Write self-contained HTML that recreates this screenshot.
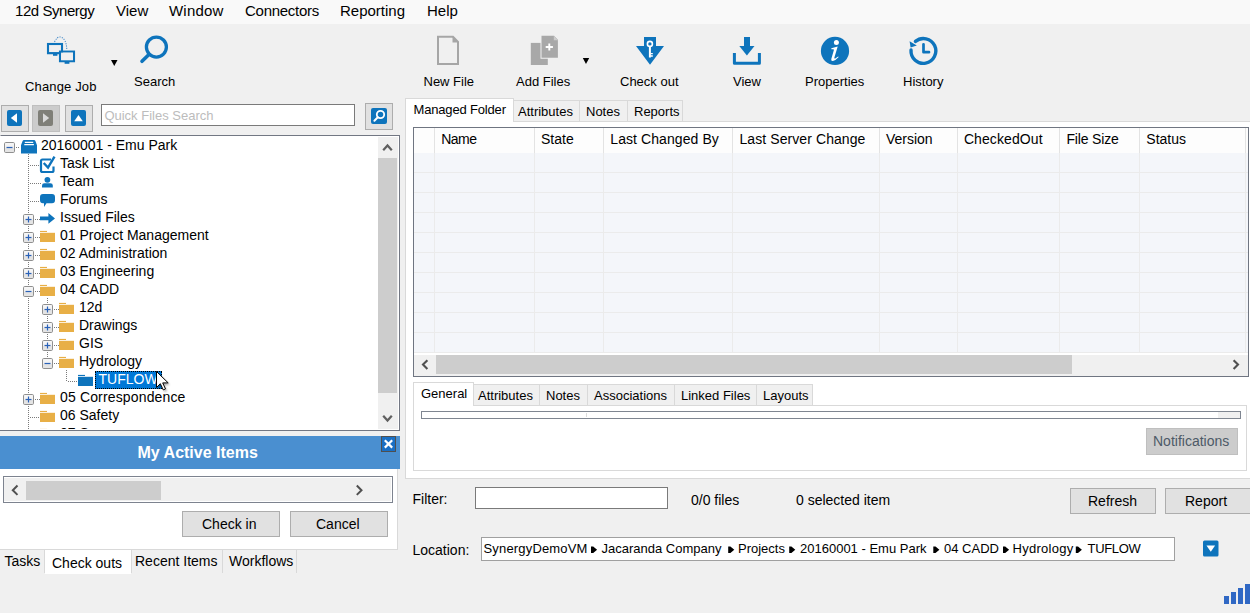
<!DOCTYPE html>
<html><head><meta charset="utf-8">
<style>
*{box-sizing:border-box}
html,body{margin:0;padding:0}
body{width:1250px;height:613px;overflow:hidden;position:relative;background:#f0f0f0;font-family:"Liberation Sans",sans-serif;color:#000}
.a{position:absolute}
.t{position:absolute;white-space:pre;line-height:1;font-family:"Liberation Sans",sans-serif}
.s13{font-size:13px}
.s14{font-size:14px}
.s15{font-size:15px}
svg{position:absolute;overflow:visible}
</style></head><body>

<!-- MENU BAR -->
<div class="a" style="left:0;top:0;width:1250px;height:24px;background:#f9f9f9"></div>
<span class="t s15" style="left:15px;top:3px;letter-spacing:-0.45px">12d Synergy</span>
<span class="t s15" style="left:116px;top:3px">View</span>
<span class="t s15" style="left:169px;top:3px;letter-spacing:0.2px">Window</span>
<span class="t s15" style="left:245px;top:3px;letter-spacing:-0.27px">Connectors</span>
<span class="t s15" style="left:340px;top:3px">Reporting</span>
<span class="t s15" style="left:427px;top:3px">Help</span>

<!-- TOOLBAR -->
<!-- change job icon -->
<svg style="left:0;top:0" width="1250" height="100">
 <g fill="none" stroke="#0e74bc" stroke-width="2.1">
  <rect x="48" y="44" width="14" height="9.2"/>
  <rect x="60" y="51.6" width="14" height="9.6"/>
 </g>
 <rect x="47" y="52.4" width="16" height="1.6" fill="#0e74bc"/>
 <rect x="59" y="60.4" width="16" height="1.6" fill="#0e74bc"/>
 <rect x="53" y="54" width="4.4" height="1.8" fill="#0e74bc"/>
 <rect x="64.6" y="62" width="4.8" height="1.8" fill="#0e74bc"/>
 <rect x="61.05" y="52.65" width="11.9" height="7.6" fill="#f0f0f0"/>
 <path d="M54.5 42 Q57 36.5 60.5 37 Q66.5 38.5 66.8 50" fill="none" stroke="#4d8fca" stroke-width="1.1" stroke-dasharray="1.2 1.2"/>
 <path d="M111 60 h6.5 l-3.25 6z" fill="#000"/>
 <!-- search -->
 <circle cx="156.4" cy="47.1" r="10" fill="none" stroke="#0e74bc" stroke-width="3.3"/>
 <path d="M149.2 54.3 L142 61.3" stroke="#0e74bc" stroke-width="3.6" stroke-linecap="round"/>
 <!-- new file -->
 <path d="M438 36.8 h15 l5 5 v22.2 h-20z" fill="none" stroke="#a6a6a6" stroke-width="2"/>
 <path d="M452.5 36 v6.5 h6.5z" fill="#a6a6a6"/>
 <!-- add files -->
 <rect x="530.8" y="42.9" width="17" height="22.1" fill="#a8a8a8"/>
 <path d="M540.5 35 h14 l4.4 4.4 v19.3 h-18.4z" fill="#f0f0f0"/>
 <path d="M541.5 35.8 h12.5 l3.9 3.9 v18 h-16.4z" fill="#a8a8a8"/>
 <path d="M553.8 35.8 v4.4 h4.4z" fill="#cccccc"/>
 <path d="M549.3 43.4 v7.2 M545.7 47 h7.2" stroke="#fff" stroke-width="1.9"/>
 <path d="M582.8 58 h6.4 l-3.2 6z" fill="#000"/>
 <!-- check out -->
 <path d="M644 37 h12 v9 h8 l-14 18.7 l-14 -18.7 h8z" fill="#0e74bc"/>
 <circle cx="649.9" cy="43.9" r="2.5" fill="none" stroke="#fff" stroke-width="1.6"/>
 <path d="M649.9 46.2 v11.3" stroke="#fff" stroke-width="2"/>
 <path d="M650.5 53.6 h2.3 M650.5 56 h2.3" stroke="#fff" stroke-width="1.3"/>
 <!-- view -->
 <rect x="744" y="37" width="6" height="9.5" fill="#0e74bc"/>
 <path d="M739.3 46 h15.2 l-7.6 9.6z" fill="#0e74bc"/>
 <path d="M734.4 53 v10.2 h25 v-10.2" fill="none" stroke="#0e74bc" stroke-width="3" stroke-linejoin="round"/>
 <!-- properties -->
 <circle cx="835" cy="50.95" r="14.1" fill="#0e74bc"/>
 <circle cx="836.4" cy="42.4" r="2.5" fill="#fff"/>
 <path d="M831.3 48.3 L837.7 46.6 L834.4 57.6 Q834 59 835.3 58.4 Q836.7 57.6 838.1 56.4 L838.7 57.1 Q835.8 60.5 832.9 60.9 Q830.7 61.1 831.3 58.9 L833.9 50.1 Q834.1 49.1 833 49.2 L831.4 49.3z" fill="#fff"/>
 <!-- history -->
 <path d="M915.43 41.4 A12.4 12.4 0 1 1 911.03 50.03" fill="none" stroke="#0e74bc" stroke-width="3.4" stroke-linecap="round"/>
 <path d="M909.6 41.2 L910.6 47.6 L916.8 45.6z" fill="#0e74bc"/>
 <path d="M923.5 44.3 v7.9 h5.5" fill="none" stroke="#0e74bc" stroke-width="2.7" stroke-linecap="round" stroke-linejoin="round"/>
</svg>
<span class="t s13" style="left:25px;top:80px;letter-spacing:0.15px">Change Job</span>
<span class="t s13" style="left:134px;top:75px">Search</span>
<span class="t s13" style="left:423.5px;top:75px">New File</span>
<span class="t s13" style="left:516px;top:75px">Add Files</span>
<span class="t s13" style="left:620px;top:75px">Check out</span>
<span class="t s13" style="left:733px;top:75px">View</span>
<span class="t s13" style="left:805px;top:75px">Properties</span>
<span class="t s13" style="left:903px;top:75px">History</span>


<!-- nav buttons -->
<div class="a" style="left:1px;top:105px;width:28px;height:27px;background:#e1e1e1;border:1px solid #adadad"></div>
<div class="a" style="left:32px;top:105px;width:28px;height:27px;background:#cccccc;border:1px solid #bfbfbf"></div>
<div class="a" style="left:65px;top:105px;width:28px;height:27px;background:#e1e1e1;border:1px solid #adadad"></div>
<svg style="left:0;top:0" width="400" height="135">
 <rect x="7" y="110" width="15" height="16" rx="2" fill="#0e74bc"/>
 <path d="M17 113.2 v9.6 l-6.2 -4.8z" fill="#fff"/>
 <rect x="38" y="110" width="15" height="16" rx="2" fill="#7f7f78"/>
 <path d="M43 113.2 v9.6 l6.2 -4.8z" fill="#d9d9d9"/>
 <rect x="71" y="110" width="15" height="16" rx="2" fill="#0e74bc"/>
 <path d="M74.2 121.2 h8.6 l-4.3 -6.2z" fill="#fff"/>
</svg>
<!-- quick search -->
<div class="a" style="left:101px;top:104px;width:254px;height:22px;background:#fff;border:1px solid #7a7a7a"></div>
<span class="t s13" style="left:104.4px;top:108.5px;color:#bcbcbc">Quick Files Search</span>
<div class="a" style="left:365px;top:103px;width:28px;height:27px;background:#e1e1e1;border:1px solid #adadad"></div>
<svg style="left:0;top:0" width="400" height="135">
 <rect x="371" y="108" width="16" height="16" rx="2" fill="#0e74bc"/>
 <circle cx="380.5" cy="114.5" r="3.7" fill="none" stroke="#fff" stroke-width="1.8"/>
 <path d="M377.8 117.3 l-3.4 3.4" stroke="#fff" stroke-width="2" stroke-linecap="round"/>
</svg>

<!-- TREE PANEL -->
<div class="a" style="left:0;top:135px;width:400px;height:296px;background:#fff;border:1px solid #727783;border-left-color:#fff;overflow:hidden">
 <div class="a" style="left:0;top:0;width:398px;height:292.6px;overflow:hidden">
<svg style="left:-1px;top:-136px" width="400" height="440">
 <defs><linearGradient id="eg" x1="0" y1="0" x2="0" y2="1"><stop offset="0" stop-color="#f8f8f8"/><stop offset="0.5" stop-color="#f0f0f0"/><stop offset="0.55" stop-color="#e2e2e2"/><stop offset="1" stop-color="#e6e6e6"/></linearGradient></defs>
 <g stroke="#7a7a7a" stroke-width="1" stroke-dasharray="1 1" fill="none">
  <path d="M28.5 154 V430"/>
  <path d="M47.5 298 V364"/>
  <path d="M66.5 370 V382"/>
  <path d="M16 147.5 H20"/>
  <path d="M30 165.5 H40"/>
  <path d="M30 183.5 H41"/>
  <path d="M30 201.5 H40"/>
  <path d="M35 219.5 H40"/><path d="M35 237.5 H40"/><path d="M35 255.5 H40"/><path d="M35 273.5 H40"/><path d="M35 291.5 H40"/>
  <path d="M54 309.5 H59"/><path d="M54 327.5 H59"/><path d="M54 345.5 H59"/><path d="M54 363.5 H59"/>
  <path d="M68 381.5 H78"/>
  <path d="M35 399.5 H40"/>
  <path d="M30 417.5 H40"/>
  <path d="M35 435.5 H40"/>
 </g>
 <rect x="4.5" y="142.5" width="10" height="10" rx="1.2" fill="url(#eg)" stroke="#8f8f8f"/>
<path d="M6.5 147.5 h6" stroke="#2a62b8" stroke-width="1.2"/>
<path d="M23.5 140 h10.5 q1 0 1.4 1 l1.6 4.2 v8.4 h-16 v-8.4 l1.6 -4.2 q0.4 -1 1.4 -1z" fill="#0e74bc"/><path d="M24.8 142.4 h8.4 M24.3 144.6 h9.6" stroke="#fff" stroke-width="1.1"/>
<path d="M51 159.5 h-8.5 a1.5 1.5 0 0 0 -1.5 1.5 v9.5 a1.5 1.5 0 0 0 1.5 1.5 h9.5 a1.5 1.5 0 0 0 1.5 -1.5 v-4" fill="none" stroke="#0e74bc" stroke-width="2.2"/><path d="M43.7 163 l4.3 4.5 l6.5 -10.8" fill="none" stroke="#0e74bc" stroke-width="2.4"/>
<circle cx="47.4" cy="179.8" r="2.9" fill="#0e74bc"/><path d="M42 187.6 v-2 q0 -2.4 2.4 -2.4 h6 q2.4 0 2.4 2.4 v2z" fill="#0e74bc"/>
<path d="M43 194 h9 q3 0 3 3 v3.3 q0 3 -3 3 h-5.5 l-2.5 3.7 v-3.7 h-1 q-3 0 -3 -3 v-3.3 q0 -3 3 -3z" fill="#0e74bc"/>
<rect x="23.5" y="214.5" width="10" height="10" rx="1.2" fill="url(#eg)" stroke="#8f8f8f"/>
<path d="M25.5 219.5 h6" stroke="#2a62b8" stroke-width="1.2"/>
<path d="M28.5 216.5 v6" stroke="#2a62b8" stroke-width="1.2"/>
<path d="M40 216.5 h8.4 v-3.5 l6.6 5.4 l-6.6 5.4 v-3.5 h-8.4z" fill="#0e74bc"/>
<rect x="23.5" y="232.5" width="10" height="10" rx="1.2" fill="url(#eg)" stroke="#8f8f8f"/>
<path d="M25.5 237.5 h6" stroke="#2a62b8" stroke-width="1.2"/>
<path d="M28.5 234.5 v6" stroke="#2a62b8" stroke-width="1.2"/>
<rect x="40" y="230.9" width="7" height="1.1" fill="#e8af46"/><rect x="40" y="232.8" width="15" height="9.2" fill="#e8af46"/>
<rect x="23.5" y="250.5" width="10" height="10" rx="1.2" fill="url(#eg)" stroke="#8f8f8f"/>
<path d="M25.5 255.5 h6" stroke="#2a62b8" stroke-width="1.2"/>
<path d="M28.5 252.5 v6" stroke="#2a62b8" stroke-width="1.2"/>
<rect x="40" y="248.9" width="7" height="1.1" fill="#e8af46"/><rect x="40" y="250.8" width="15" height="9.2" fill="#e8af46"/>
<rect x="23.5" y="268.5" width="10" height="10" rx="1.2" fill="url(#eg)" stroke="#8f8f8f"/>
<path d="M25.5 273.5 h6" stroke="#2a62b8" stroke-width="1.2"/>
<path d="M28.5 270.5 v6" stroke="#2a62b8" stroke-width="1.2"/>
<rect x="40" y="266.9" width="7" height="1.1" fill="#e8af46"/><rect x="40" y="268.8" width="15" height="9.2" fill="#e8af46"/>
<rect x="23.5" y="286.5" width="10" height="10" rx="1.2" fill="url(#eg)" stroke="#8f8f8f"/>
<path d="M25.5 291.5 h6" stroke="#2a62b8" stroke-width="1.2"/>
<rect x="40" y="284.9" width="7" height="1.1" fill="#e8af46"/><rect x="40" y="286.8" width="15" height="9.2" fill="#e8af46"/>
<rect x="42.5" y="304.5" width="10" height="10" rx="1.2" fill="url(#eg)" stroke="#8f8f8f"/>
<path d="M44.5 309.5 h6" stroke="#2a62b8" stroke-width="1.2"/>
<path d="M47.5 306.5 v6" stroke="#2a62b8" stroke-width="1.2"/>
<rect x="59" y="302.9" width="7" height="1.1" fill="#e8af46"/><rect x="59" y="304.8" width="15" height="9.2" fill="#e8af46"/>
<rect x="42.5" y="322.5" width="10" height="10" rx="1.2" fill="url(#eg)" stroke="#8f8f8f"/>
<path d="M44.5 327.5 h6" stroke="#2a62b8" stroke-width="1.2"/>
<path d="M47.5 324.5 v6" stroke="#2a62b8" stroke-width="1.2"/>
<rect x="59" y="320.9" width="7" height="1.1" fill="#e8af46"/><rect x="59" y="322.8" width="15" height="9.2" fill="#e8af46"/>
<rect x="42.5" y="340.5" width="10" height="10" rx="1.2" fill="url(#eg)" stroke="#8f8f8f"/>
<path d="M44.5 345.5 h6" stroke="#2a62b8" stroke-width="1.2"/>
<path d="M47.5 342.5 v6" stroke="#2a62b8" stroke-width="1.2"/>
<rect x="59" y="338.9" width="7" height="1.1" fill="#e8af46"/><rect x="59" y="340.8" width="15" height="9.2" fill="#e8af46"/>
<rect x="42.5" y="358.5" width="10" height="10" rx="1.2" fill="url(#eg)" stroke="#8f8f8f"/>
<path d="M44.5 363.5 h6" stroke="#2a62b8" stroke-width="1.2"/>
<rect x="59" y="356.9" width="7" height="1.1" fill="#e8af46"/><rect x="59" y="358.8" width="15" height="9.2" fill="#e8af46"/>
<rect x="78" y="374.9" width="7" height="1.1" fill="#0e74bc"/><rect x="78" y="376.8" width="15" height="9.2" fill="#0e74bc"/>
<rect x="23.5" y="394.5" width="10" height="10" rx="1.2" fill="url(#eg)" stroke="#8f8f8f"/>
<path d="M25.5 399.5 h6" stroke="#2a62b8" stroke-width="1.2"/>
<path d="M28.5 396.5 v6" stroke="#2a62b8" stroke-width="1.2"/>
<rect x="40" y="392.9" width="7" height="1.1" fill="#e8af46"/><rect x="40" y="394.8" width="15" height="9.2" fill="#e8af46"/>
<rect x="40" y="410.9" width="7" height="1.1" fill="#e8af46"/><rect x="40" y="412.8" width="15" height="9.2" fill="#e8af46"/>
<rect x="23.5" y="430.5" width="10" height="10" rx="1.2" fill="url(#eg)" stroke="#8f8f8f"/>
<path d="M25.5 435.5 h6" stroke="#2a62b8" stroke-width="1.2"/>
<path d="M28.5 432.5 v6" stroke="#2a62b8" stroke-width="1.2"/>
<rect x="40" y="428.9" width="7" height="1.1" fill="#e8af46"/><rect x="40" y="430.8" width="15" height="9.2" fill="#e8af46"/>
</svg>
<span class="t s14" style="left:40.0px;top:2.0px">20160001 - Emu Park</span>
<span class="t s14" style="left:59.0px;top:20.0px">Task List</span>
<span class="t s14" style="left:59.0px;top:38.0px">Team</span>
<span class="t s14" style="left:59.0px;top:56.0px">Forums</span>
<span class="t s14" style="left:59.0px;top:74.0px">Issued Files</span>
<span class="t s14" style="left:59.0px;top:92.0px">01 Project Management</span>
<span class="t s14" style="left:59.0px;top:110.0px">02 Administration</span>
<span class="t s14" style="left:59.0px;top:128.0px">03 Engineering</span>
<span class="t s14" style="left:59.0px;top:146.0px">04 CADD</span>
<span class="t s14" style="left:78.0px;top:164.0px">12d</span>
<span class="t s14" style="left:78.0px;top:182.0px">Drawings</span>
<span class="t s14" style="left:78.0px;top:200.0px">GIS</span>
<span class="t s14" style="left:78.0px;top:218.0px">Hydrology</span>
<div class="a" style="left:94.0px;top:235.0px;width:67px;height:18px;background:#0078d7;outline:1px dotted #000;outline-offset:-1px"></div>
<span class="t s14" style="left:97.5px;top:236.0px;color:#fff">TUFLOW</span>
<span class="t s14" style="left:59.0px;top:254.0px;letter-spacing:0.15px">05 Correspondence</span>
<span class="t s14" style="left:59.0px;top:272.0px">06 Safety</span>
<span class="t s14" style="left:59.0px;top:290.0px">07 Survey</span>
 </div>
 <!-- scrollbar -->
 <div class="a" style="left:377px;top:1px;width:20px;height:292px;background:#f0f0f0"></div>
 <div class="a" style="left:377px;top:22px;width:19px;height:235px;background:#cdcdcd"></div>
 <svg style="left:0;top:0" width="400" height="300">
  <path d="M382.2 14.2 L386.5 9.4 L390.8 14.2" fill="none" stroke="#606060" stroke-width="2.2"/>
  <path d="M382.2 279.8 L386.5 284.6 L390.8 279.8" fill="none" stroke="#606060" stroke-width="2.2"/>
 </svg>
</div>


<svg style="left:0;top:0" width="400" height="430">
 <defs><filter id="sh" x="-50%" y="-50%" width="200%" height="200%"><feGaussianBlur stdDeviation="1.2"/></filter></defs>
 <path d="M158 373.5 v16 l3.8 -3.8 l3 6.2 l2.2 -1 l-2.8 -6 h5.5z" fill="#000" opacity="0.35" filter="url(#sh)"/>
 <path d="M156.5 371.5 v16 l3.8 -3.8 l3 6.2 l2.2 -1 l-2.8 -6 h5.5z" fill="#fff" stroke="#000" stroke-width="1" stroke-linejoin="miter"/>
</svg>

<div class="a" style="left:0;top:430px;width:1px;height:1px;background:#727783"></div>
<!-- MY ACTIVE ITEMS -->
<div class="a" style="left:0;top:436px;width:400px;height:33px;background:#4a8fd0"></div>
<span class="t" style="left:137.5px;top:445px;font-size:16px;font-weight:bold;color:#fff">My Active Items</span>
<div class="a" style="left:381px;top:436px;width:15px;height:16px;border:1px solid #4f4f4f;background:#1a6fc4"></div>
<svg style="left:0;top:0" width="400" height="613">
 <path d="M384.8 440.2 l7.4 7.4 M392.2 440.2 l-7.4 7.4" stroke="#fff" stroke-width="2.2"/>
</svg>
<div class="a" style="left:0;top:469px;width:398px;height:81px;background:#fff;border-right:1px solid #d9d9d9;border-bottom:1px solid #d9d9d9"></div>
<div class="a" style="left:3px;top:476px;width:390px;height:27px;background:#fff;border:1px solid #7d838f"></div>
<div class="a" style="left:4px;top:478px;width:387px;height:23px;background:#f0f0f0"></div>
<div class="a" style="left:26px;top:481px;width:135px;height:19px;background:#cdcdcd"></div>
<svg style="left:0;top:0" width="400" height="613">
 <path d="M17.5 485.5 L12.8 490.2 L17.5 494.9" fill="none" stroke="#505050" stroke-width="2"/>
 <path d="M356.8 485.5 L361.5 490.2 L356.8 494.9" fill="none" stroke="#505050" stroke-width="2"/>
</svg>
<div class="a" style="left:182px;top:511px;width:98px;height:26px;background:#e1e1e1;border:1px solid #adadad"></div>
<span class="t s14" style="left:202px;top:517px">Check in</span>
<div class="a" style="left:290px;top:511px;width:98px;height:26px;background:#e1e1e1;border:1px solid #adadad"></div>
<span class="t s14" style="left:316px;top:517px">Cancel</span>
<!-- bottom tabs -->
<div class="a" style="left:0;top:550px;width:45px;height:23px;border-right:1px solid #d9d9d9"></div>
<div class="a" style="left:45px;top:550px;width:86px;height:24px;background:#fff"></div>
<div class="a" style="left:131px;top:550px;width:92px;height:23px;border-right:1px solid #d9d9d9;border-left:1px solid #d9d9d9"></div>
<div class="a" style="left:223px;top:550px;width:74px;height:23px;border-right:1px solid #d9d9d9"></div>
<span class="t s14" style="left:4.5px;top:554px">Tasks</span>
<span class="t s14" style="left:52px;top:556px">Check outs</span>
<span class="t s14" style="left:135px;top:554px">Recent Items</span>
<span class="t s14" style="left:229px;top:554px">Workflows</span>



<!-- RIGHT PANEL -->
<div class="a" style="left:405px;top:121px;width:850px;height:358px;background:#fff;border:1px solid #d9d9d9"></div>
<div class="a" style="left:513px;top:100px;width:67px;height:22px;background:#f0f0f0;border:1px solid #d9d9d9"></div>
<div class="a" style="left:579px;top:100px;width:49px;height:22px;background:#f0f0f0;border:1px solid #d9d9d9"></div>
<div class="a" style="left:627px;top:100px;width:56px;height:22px;background:#f0f0f0;border:1px solid #d9d9d9"></div>
<div class="a" style="left:405px;top:98px;width:109px;height:24px;background:#fff;border:1px solid #d9d9d9;border-bottom:none"></div>
<span class="t s13" style="left:413.5px;top:102.5px;letter-spacing:-0.17px">Managed Folder</span>
<span class="t s13" style="left:518px;top:105px">Attributes</span>
<span class="t s13" style="left:586px;top:105px">Notes</span>
<span class="t s13" style="left:634px;top:105px">Reports</span>
<!-- grid -->
<div class="a" style="left:413px;top:127px;width:836px;height:250px;background:#fdfdfd;border:1px solid #6f7581"></div>
<div class="a" style="left:414px;top:353px;width:834px;height:23px;background:#fff"></div>
<div class="a" style="left:414px;top:355px;width:834px;height:21px;background:#f0f0f0"></div>
<div class="a" style="left:436px;top:355px;width:636px;height:19px;background:#cdcdcd"></div>
<svg style="left:0;top:0" width="1250" height="613"><rect x="414" y="153" width="834" height="200" fill="#f4f6fa"/><path d="M414 172.5 H1248" stroke="#ebebeb"/><path d="M414 192.5 H1248" stroke="#ebebeb"/><path d="M414 212.5 H1248" stroke="#ebebeb"/><path d="M414 232.5 H1248" stroke="#ebebeb"/><path d="M414 252.5 H1248" stroke="#ebebeb"/><path d="M414 272.5 H1248" stroke="#ebebeb"/><path d="M414 292.5 H1248" stroke="#ebebeb"/><path d="M414 312.5 H1248" stroke="#ebebeb"/><path d="M414 332.5 H1248" stroke="#ebebeb"/><path d="M414 352.5 H1248" stroke="#ebebeb"/><path d="M434.5 153 V353" stroke="#ebebeb"/><path d="M434.5 128 V153" stroke="#e3e3e3"/><path d="M534.5 153 V353" stroke="#ebebeb"/><path d="M534.5 128 V153" stroke="#e3e3e3"/><path d="M603.5 153 V353" stroke="#ebebeb"/><path d="M603.5 128 V153" stroke="#e3e3e3"/><path d="M732.5 153 V353" stroke="#ebebeb"/><path d="M732.5 128 V153" stroke="#e3e3e3"/><path d="M879.5 153 V353" stroke="#ebebeb"/><path d="M879.5 128 V153" stroke="#e3e3e3"/><path d="M957.5 153 V353" stroke="#ebebeb"/><path d="M957.5 128 V153" stroke="#e3e3e3"/><path d="M1059.5 153 V353" stroke="#ebebeb"/><path d="M1059.5 128 V153" stroke="#e3e3e3"/><path d="M1139.5 153 V353" stroke="#ebebeb"/><path d="M1139.5 128 V153" stroke="#e3e3e3"/><path d="M1245.5 153 V353" stroke="#ebebeb"/><path d="M1245.5 128 V153" stroke="#e3e3e3"/>
 <path d="M427.4 360.2 L423 364.6 L427.4 369" fill="none" stroke="#505050" stroke-width="2.1"/>
 <path d="M1233.6 360.2 L1238 364.6 L1233.6 369" fill="none" stroke="#505050" stroke-width="2.1"/>
</svg>

<span class="t s14" style="left:441.2px;top:132px;letter-spacing:-0.5px">Name</span>
<span class="t s14" style="left:541px;top:132px;letter-spacing:0px">State</span>
<span class="t s14" style="left:610.3px;top:132px;letter-spacing:0.08px">Last Changed By</span>
<span class="t s14" style="left:739.5px;top:132px;letter-spacing:0.08px">Last Server Change</span>
<span class="t s14" style="left:885.9px;top:132px;letter-spacing:0px">Version</span>
<span class="t s14" style="left:963.9px;top:132px;letter-spacing:0.1px">CheckedOut</span>
<span class="t s14" style="left:1066.4px;top:132px;letter-spacing:-0.15px">File Size</span>
<span class="t s14" style="left:1146.3px;top:132px;letter-spacing:0px">Status</span>
<!-- lower tabs -->
<div class="a" style="left:413px;top:405px;width:834px;height:66px;background:#fff;border:1px solid #d9d9d9"></div>
<div class="a" style="left:473px;top:384px;width:67px;height:22px;background:#f0f0f0;border:1px solid #d9d9d9"></div>
<div class="a" style="left:539px;top:384px;width:49px;height:22px;background:#f0f0f0;border:1px solid #d9d9d9"></div>
<div class="a" style="left:587px;top:384px;width:88px;height:22px;background:#f0f0f0;border:1px solid #d9d9d9"></div>
<div class="a" style="left:674px;top:384px;width:83px;height:22px;background:#f0f0f0;border:1px solid #d9d9d9"></div>
<div class="a" style="left:756px;top:384px;width:57px;height:22px;background:#f0f0f0;border:1px solid #d9d9d9"></div>
<div class="a" style="left:413px;top:382px;width:61px;height:24px;background:#fff;border:1px solid #d9d9d9;border-bottom:none"></div>
<span class="t s13" style="left:421px;top:387px">General</span>
<span class="t s13" style="left:478px;top:389px">Attributes</span>
<span class="t s13" style="left:546px;top:389px">Notes</span>
<span class="t s13" style="left:594px;top:389px">Associations</span>
<span class="t s13" style="left:681px;top:389px">Linked Files</span>
<span class="t s13" style="left:763px;top:389px">Layouts</span>
<div class="a" style="left:421px;top:411px;width:820px;height:8px;background:#fff;border:1px solid #7f8691"></div>
<div class="a" style="left:1218px;top:412px;width:22px;height:6px;background:#f0f0f0"></div>
<div class="a" style="left:586px;top:413px;width:1px;height:4px;background:#dcdcdc"></div>
<div class="a" style="left:1146px;top:428px;width:92px;height:27px;background:#cccccc;border:1px solid #bfbfbf"></div>
<span class="t s14" style="left:1153px;top:434px;color:#4d5a67">Notifications</span>



<!-- BOTTOM -->
<span class="t s14" style="left:412.5px;top:492px">Filter:</span>
<div class="a" style="left:475px;top:487px;width:193px;height:22px;background:#fff;border:1px solid #7a7a7a"></div>
<span class="t s14" style="left:691px;top:493px">0/0 files</span>
<span class="t s14" style="left:796px;top:493px">0 selected item</span>
<div class="a" style="left:1070px;top:488px;width:86px;height:26px;background:#e1e1e1;border:1px solid #adadad"></div>
<span class="t s14" style="left:1088px;top:494px">Refresh</span>
<div class="a" style="left:1165px;top:488px;width:90px;height:26px;background:#e1e1e1;border:1px solid #adadad"></div>
<span class="t s14" style="left:1185px;top:494px">Report</span>
<span class="t s14" style="left:412.5px;top:543px">Location:</span>
<div class="a" style="left:481px;top:537px;width:694px;height:24px;background:#fff;border:1px solid #a0a0a0"></div>
<span class="t s13" style="left:483.5px;top:542px;letter-spacing:0.17px">SynergyDemoVM</span>
<span class="t s13" style="left:601.5px;top:542px">Jacaranda Company</span>
<span class="t s13" style="left:738px;top:542px">Projects</span>
<span class="t s13" style="left:800px;top:542px">20160001 - Emu Park</span>
<span class="t s13" style="left:944px;top:542px">04 CADD</span>
<span class="t s13" style="left:1012.5px;top:542px;letter-spacing:0.27px">Hydrology</span>
<span class="t s13" style="left:1087.5px;top:542px;letter-spacing:-0.3px">TUFLOW</span>
<svg style="left:0;top:0" width="1250" height="613">
 <path d="M591 546.6 h2.2 l3.9 3.15 l-3.9 3.15 h-2.2z M728.2 546.6 h2.2 l3.9 3.15 l-3.9 3.15 h-2.2z M789.2 546.6 h2.2 l3.9 3.15 l-3.9 3.15 h-2.2z M933.3 546.6 h2.2 l3.9 3.15 l-3.9 3.15 h-2.2z M1003 546.6 h2.2 l3.9 3.15 l-3.9 3.15 h-2.2z M1075.8 546.6 h2.2 l3.9 3.15 l-3.9 3.15 h-2.2z" fill="#000"/>
 <rect x="1203" y="540.5" width="15.5" height="16" rx="1.5" fill="#0e74bc"/>
 <path d="M1206.5 545.5 h8.6 l-4.3 6.2z" fill="#fff"/>
 <rect x="1224" y="596" width="5" height="8" fill="#3068c4"/>
 <rect x="1231" y="592" width="5" height="12" fill="#3068c4"/>
 <rect x="1238" y="588" width="5" height="16" fill="#3068c4"/>
 <rect x="1245" y="584" width="5" height="20" fill="#3068c4"/>
</svg>


</body></html>
